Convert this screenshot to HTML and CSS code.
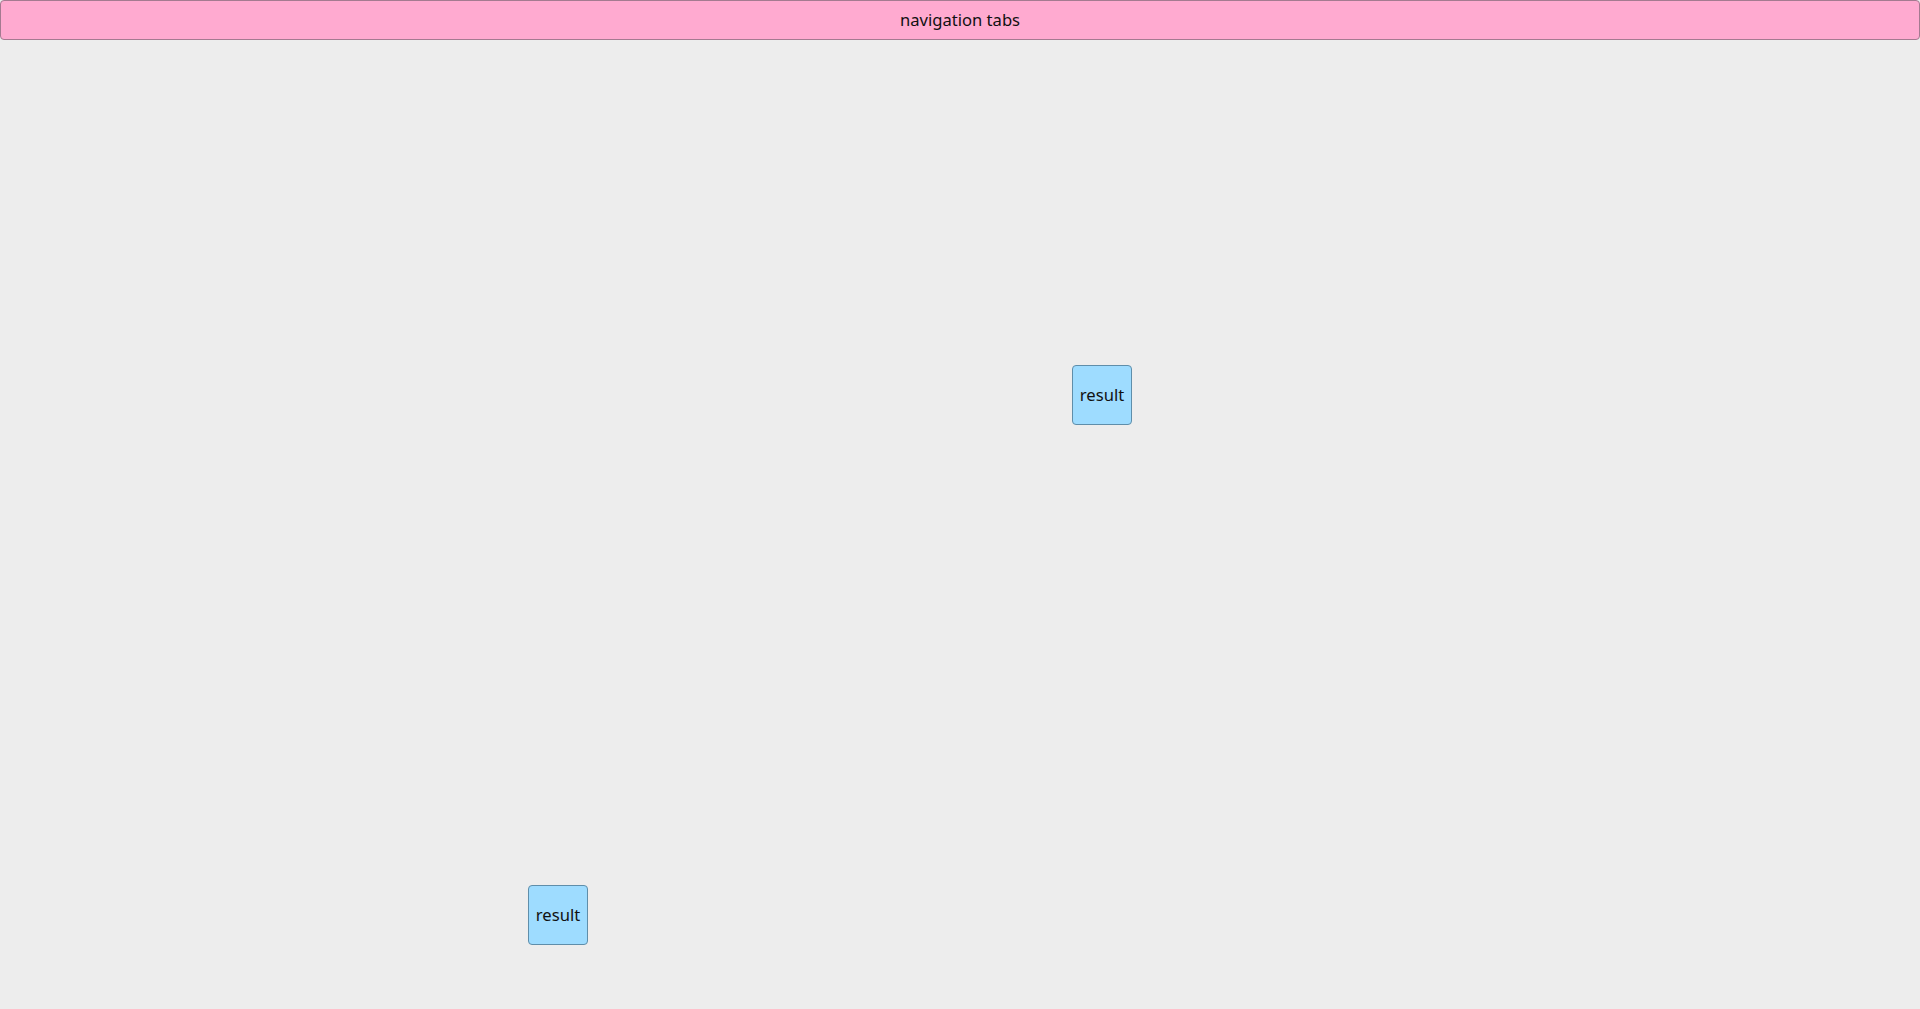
FILE: index.html
```html
<!DOCTYPE html>
<html lang="en">
<head>
<meta charset="utf-8">
<title>navigation tabs</title>
<link rel="stylesheet" href="styles.css">
</head>
<body>
<div class="page">
  <nav class="tabs">navigation tabs</nav>
  <main class="canvas">
    <div class="result result-a">result</div>
    <div class="result result-b">result</div>
  </main>
</div>
</body>
</html>
```
FILE: styles.css
```css
html, body {
  margin: 0;
  padding: 0;
  height: 100%;
  background: #ededed;
  font-family: "Noto Sans", "Open Sans", sans-serif;
  font-size: 16.6px;
  color: #111;
}
.page {
  display: flex;
  flex-direction: column;
  height: 100%;
}
.tabs {
  box-sizing: border-box;
  height: 40px;
  padding-bottom: 2px;
  display: flex;
  align-items: center;
  justify-content: center;
  background: #ffaad0;
  border: 1px solid #a57a90;
  border-radius: 4px;
}
.canvas {
  position: relative;
  flex: 1;
}
.result {
  position: absolute;
  box-sizing: border-box;
  width: 60px;
  height: 60px;
  padding-bottom: 2px;
  display: flex;
  align-items: center;
  justify-content: center;
  background: #9edcff;
  border: 1px solid #5f8eaa;
  border-radius: 4px;
}
.result-a { left: 1072px; top: 325px; }
.result-b { left: 528px; top: 845px; }
```
